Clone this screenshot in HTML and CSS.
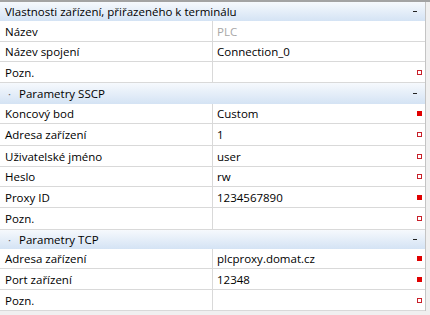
FILE: index.html
```html
<!DOCTYPE html>
<html lang="cs">
<head>
    <meta charset="UTF-8">
    <title>Vlastnosti zařízení</title>
    <link rel="stylesheet" href="styles.css">
</head>
<body>
    <div class="grid">
        <div class="group top">
            <span class="group-title">Vlastnosti zařízení, přiřazeného k terminálu</span>
            <span class="collapse"></span>
        </div>
        <div class="row h21"><div class="name">Název</div><div class="value disabled">PLC</div></div>
        <div class="row h20"><div class="name">Název spojení</div><div class="value">Connection_0</div></div>
        <div class="row h21"><div class="name">Pozn.</div><div class="value"><span></span><i class="mark"></i></div></div>

        <div class="group h21">
            <span class="group-title"><b class="dot">·</b>Parametry SSCP</span>
            <span class="collapse"></span>
        </div>
        <div class="row h20"><div class="name">Koncový bod</div><div class="value"><span>Custom</span><i class="mark full"></i></div></div>
        <div class="row h22"><div class="name">Adresa zařízení</div><div class="value"><span>1</span><i class="mark"></i></div></div>
        <div class="row h21"><div class="name">Uživatelské jméno</div><div class="value"><span>user</span><i class="mark"></i></div></div>
        <div class="row h20"><div class="name">Heslo</div><div class="value"><span>rw</span><i class="mark"></i></div></div>
        <div class="row h21"><div class="name">Proxy ID</div><div class="value"><span>1234567890</span><i class="mark full"></i></div></div>
        <div class="row h22"><div class="name">Pozn.</div><div class="value"><span></span><i class="mark"></i></div></div>

        <div class="group h19">
            <span class="group-title"><b class="dot">·</b>Parametry TCP</span>
            <span class="collapse"></span>
        </div>
        <div class="row h20"><div class="name">Adresa zařízení</div><div class="value"><span>plcproxy.domat.cz</span><i class="mark full"></i></div></div>
        <div class="row h21"><div class="name">Port zařízení</div><div class="value"><span>12348</span><i class="mark full"></i></div></div>
        <div class="row h21"><div class="name">Pozn.</div><div class="value"><span></span><i class="mark"></i></div></div>
    </div>
</body>
</html>
```

FILE: styles.css
```css
body {
    margin: 0;
    height: 315px;
    overflow: hidden;
    background: #f0f0f0;
    border-top: 2px solid #a3a3a3;
    font-family: "Open Sans", "Noto Sans", sans-serif;
    font-size: 11.5px;
    color: #000;
}

.grid {
    width: 425px;
    background: #fff;
    border-right: 1px solid #c4c4c4;
}

/* row heights follow the original grid, which is not quite regular */
.h19 { height: 19px; }
.h20 { height: 20px; }
.h21 { height: 21px; }
.h22 { height: 22px; }

.group {
    display: flex;
    align-items: center;
    justify-content: space-between;
    box-sizing: border-box;
    padding: 0 8px 0 5px;
    background: linear-gradient(to bottom, #f6f9fd, #d4e3f4);
}

.group.top {
    height: 19px;
}

.group-title {
    display: flex;
    align-items: center;
}

.dot {
    font-weight: normal;
    color: #666;
    margin: 0 8px 0 3px;
}

.collapse {
    width: 4px;
    height: 1px;
    background: #222;
}

.row {
    display: grid;
    grid-template-columns: 213px 1fr;
    box-sizing: border-box;
    border-bottom: 1px solid #d9d9d9;
}

.name {
    display: flex;
    align-items: center;
    padding-left: 5px;
    border-right: 1px solid #d9d9d9;
}

.value {
    display: flex;
    align-items: center;
    justify-content: space-between;
    padding: 0 3px 0 4px;
}

.value.disabled {
    color: #a8a8a8;
}

.mark {
    box-sizing: border-box;
    width: 5px;
    height: 5px;
    border: 1px solid #c8202a;
    background: #fff;
}

.mark.full {
    border-color: #e00000;
    background: #e00000;
}
```
